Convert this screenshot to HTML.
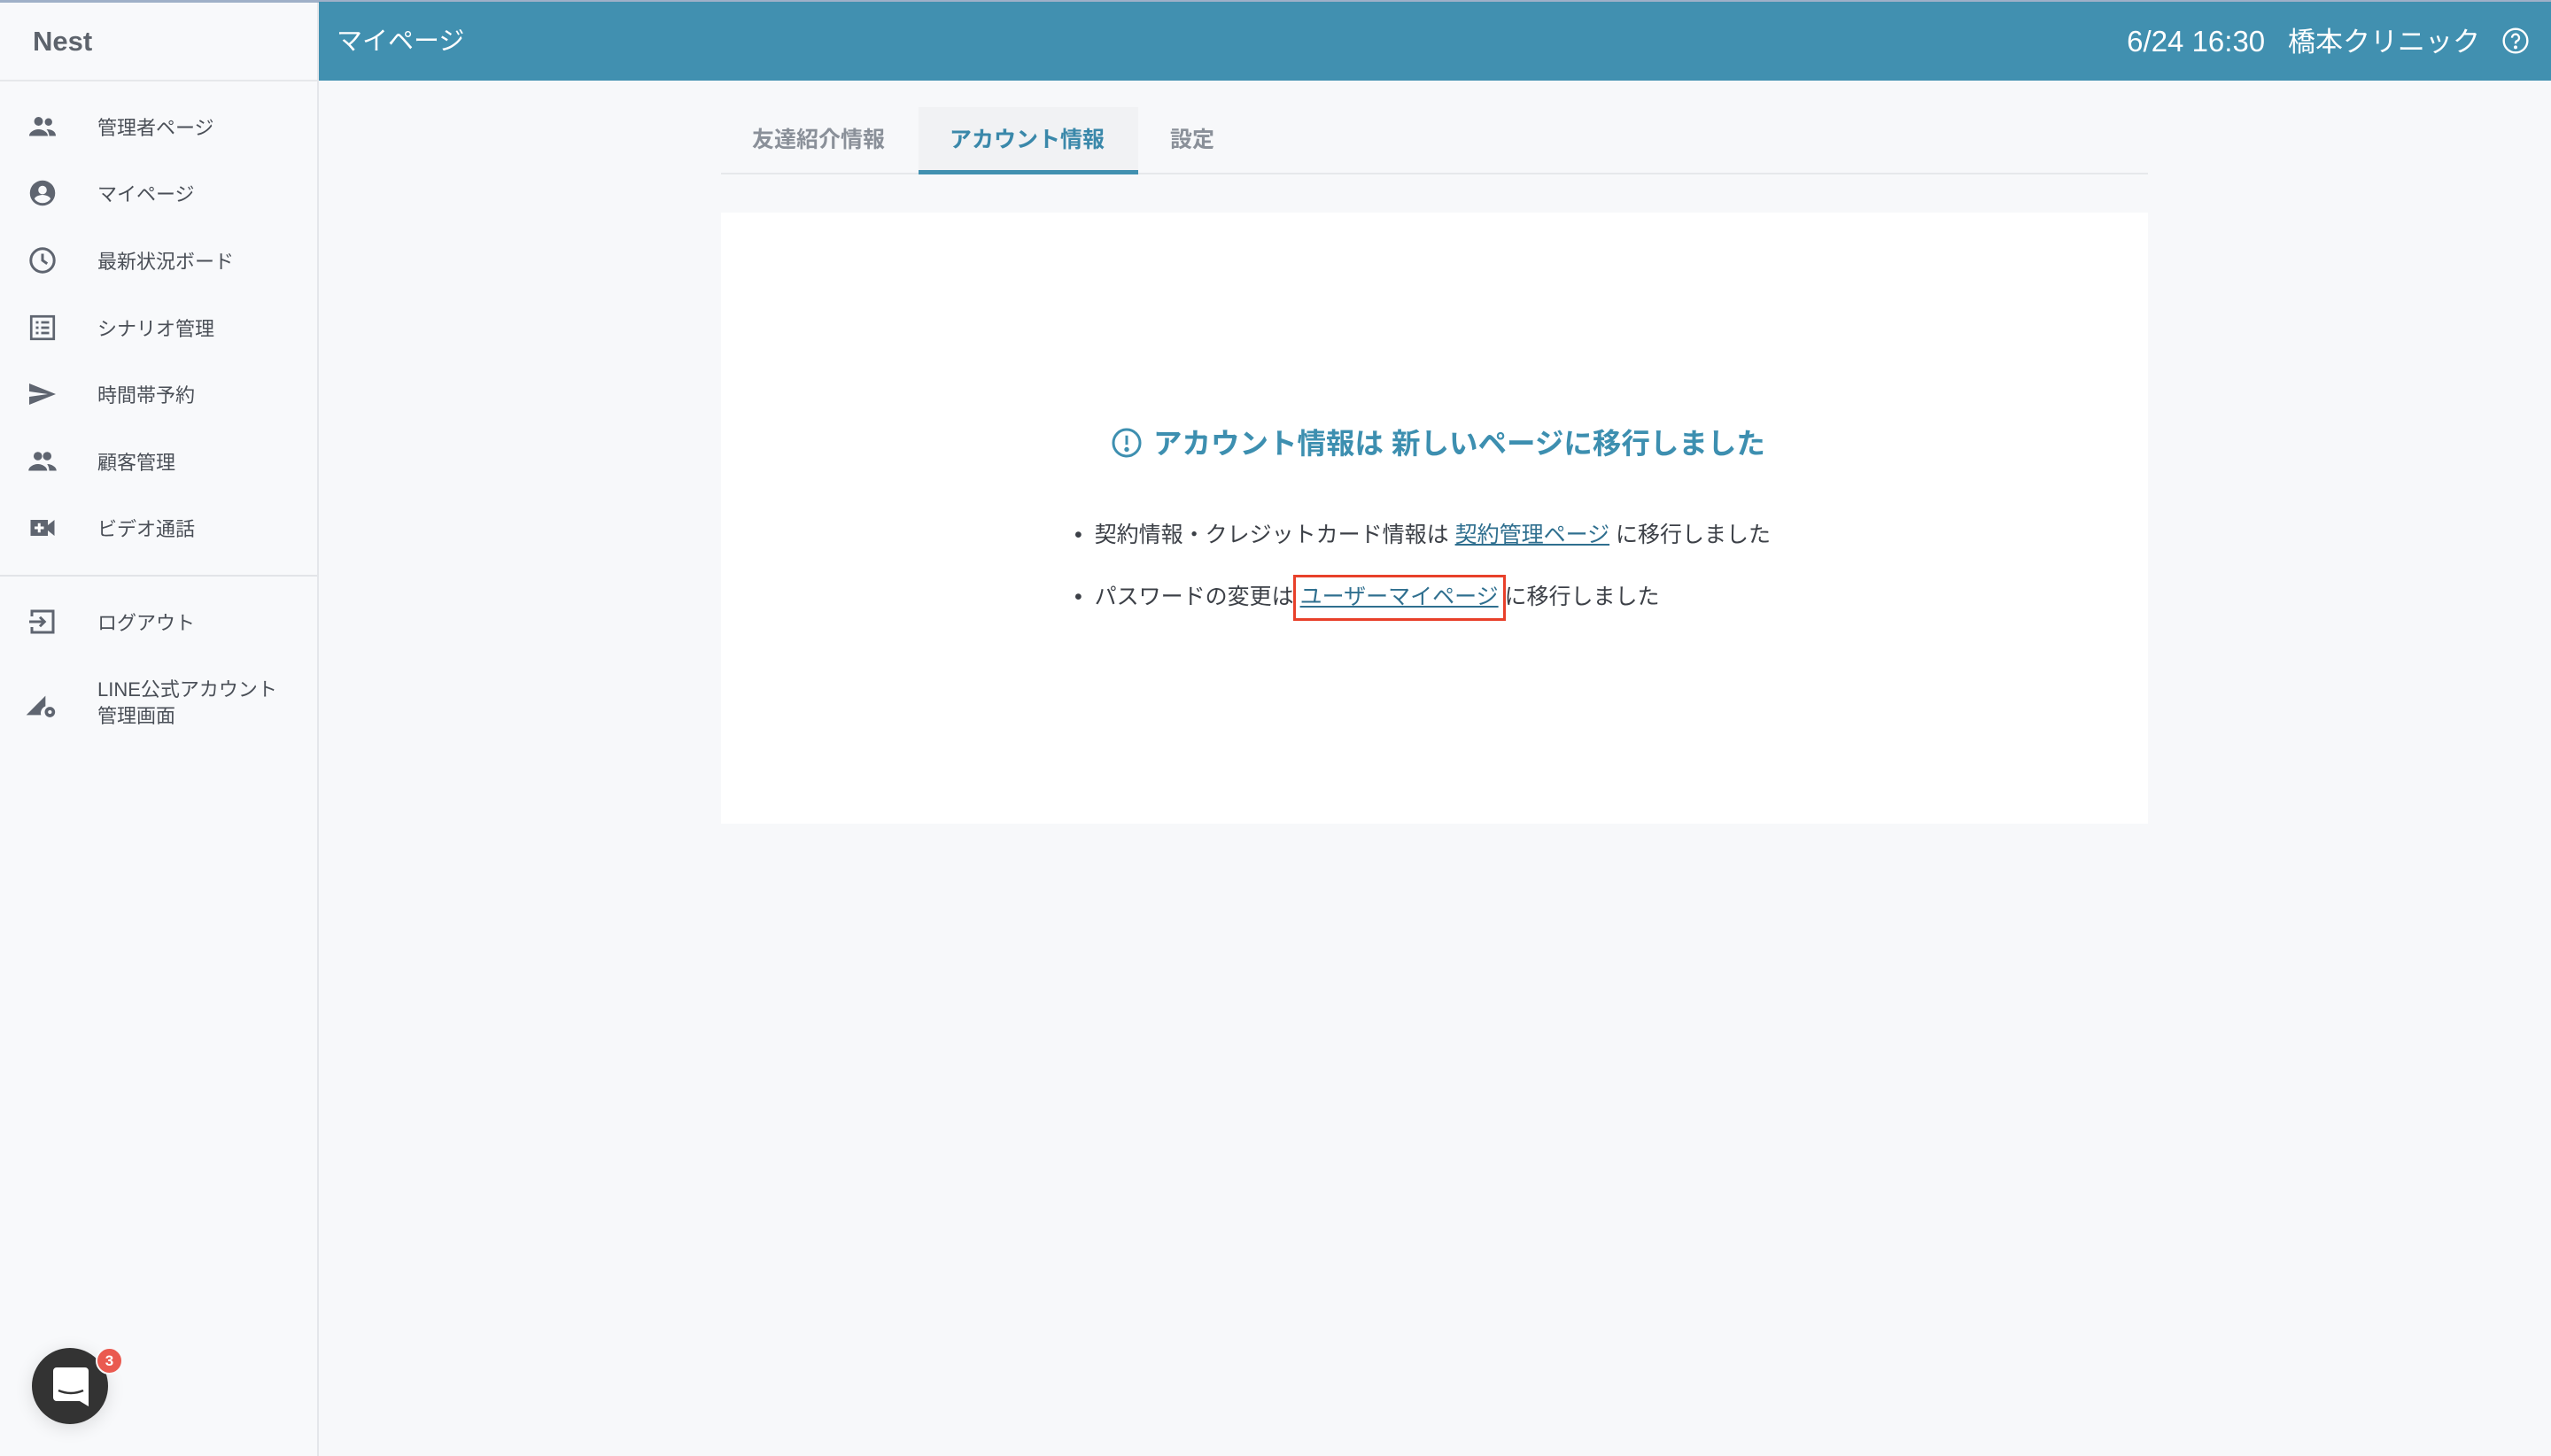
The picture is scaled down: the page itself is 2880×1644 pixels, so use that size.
<!DOCTYPE html>
<html><head><meta charset="utf-8"><style>
*{margin:0;padding:0;box-sizing:border-box}
body{width:2880px;height:1644px;background:#f7f8fa;font-family:"Liberation Sans","Noto Sans CJK JP",sans-serif;position:relative;overflow:hidden;color:#3c4047}
.abs{position:absolute}
#top{left:0;top:0;width:2880px;height:3px;background:#9fb0c8}
#side{left:0;top:0;width:360px;height:1644px;background:#f8f9fb;border-right:2px solid #e4e6ea}
#head{left:360px;top:2px;width:2520px;height:89px;background:#4190b0;color:#fff}
.mi{position:absolute;left:110px;font-size:22px;color:#4a4f57;line-height:30px}
.ic{position:absolute;left:30px;width:36px;height:36px}
</style></head><body>
<div id="side" class="abs">
 <div class="abs" style="left:37px;top:29px;font-size:31px;font-weight:bold;color:#5d636c">Nest</div>
 <div class="abs" style="left:0;top:90px;width:358px;height:2px;background:#e6e8eb"></div>
 <div class="abs" style="left:0;top:649px;width:358px;height:2px;background:#e2e4e8"></div>

 <svg class="ic" style="top:125px" viewBox="0 0 24 24" fill="#5f6570"><circle cx="9" cy="8" r="3.3"/><circle cx="16.5" cy="8.5" r="2.8"/><path d="M2 19c0-3 4-5 7-5s7 2 7 5zM15 14c3 0 7 1 7 5h-5c0-2-1-4-2-5z"/></svg>
 <div class="mi" style="top:130px">管理者ページ</div>
 <svg class="ic" style="top:200px" viewBox="0 0 24 24" fill="#5f6570"><path d="M12 2.5a9.5 9.5 0 1 0 0 19a9.5 9.5 0 1 0 0-19zm0 4a3.2 3.2 0 1 1 0 6.4a3.2 3.2 0 1 1 0-6.4zm0 13a7.5 7.5 0 0 1-6-3c0-2 4-3.2 6-3.2s6 1.2 6 3.2a7.5 7.5 0 0 1-6 3z"/></svg>
 <div class="mi" style="top:205px">マイページ</div>
 <svg class="ic" style="top:276px" viewBox="0 0 24 24" fill="none" stroke="#5f6570" stroke-width="2"><circle cx="12" cy="12" r="8.8"/><path d="M12 7v5l3.5 2.5"/></svg>
 <div class="mi" style="top:281px">最新状況ボード</div>
 <svg class="ic" style="top:352px" viewBox="0 0 24 24" fill="none" stroke="#5f6570" stroke-width="1.8"><rect x="3.5" y="3.5" width="17" height="17"/><path d="M7 8h2M11 8h6M7 12h2M11 12h6M7 16h2M11 16h6"/></svg>
 <div class="mi" style="top:357px">シナリオ管理</div>
 <svg class="ic" style="top:427px" viewBox="0 0 24 24" fill="#5f6570"><path d="M2 4l20 8-20 8v-6l14-2-14-2z"/></svg>
 <div class="mi" style="top:432px">時間帯予約</div>
 <svg class="ic" style="top:503px" viewBox="0 0 24 24" fill="#5f6570"><circle cx="8.5" cy="8" r="3.2"/><circle cx="15.5" cy="8" r="3.2"/><path d="M1.5 19c0-3 4-5 7-5s7 2 7 5zM15.5 14c3 0 7 2 7 5h-5.5c0-2-.5-3.5-1.5-5z"/></svg>
 <div class="mi" style="top:508px">顧客管理</div>
 <svg class="ic" style="top:578px" viewBox="0 0 24 24" fill="#5f6570"><path d="M3 6h13v12H3zM16 10l5-4v12l-5-4z"/><path d="M9.5 8.5v7M6 12h7" stroke="#fff" stroke-width="2"/></svg>
 <div class="mi" style="top:583px">ビデオ通話</div>
 <svg class="ic" style="top:684px" viewBox="0 0 24 24" fill="none" stroke="#5f6570" stroke-width="2"><path d="M4 8V4h16v16H4v-4"/><path d="M2 12h11M10 8.5l3.5 3.5-3.5 3.5"/></svg>
 <div class="mi" style="top:689px">ログアウト</div>
 <svg class="ic" style="top:774px;left:28px;width:40px;height:40px" viewBox="0 0 24 24" fill="#5f6570"><path d="M1 20L14 7v7a5 5 0 0 0-3 6z"/><circle cx="17" cy="18" r="3.5"/><circle cx="17" cy="18" r="1.3" fill="#f8f9fb"/></svg>
 <div class="mi" style="top:764px">LINE公式アカウント<br>管理画面</div>

 <div class="abs" style="left:36px;top:1522px;width:86px;height:86px;border-radius:50%;background:#333;box-shadow:0 4px 20px rgba(0,0,0,.12)"></div>
 <svg class="abs" style="left:60px;top:1544px" width="40" height="44" viewBox="0 0 40 44"><path d="M4 0h32a4 4 0 0 1 4 4v40l-10-6H4a4 4 0 0 1-4-4V4a4 4 0 0 1 4-4z" fill="#fff"/><path d="M6 26q14 6 28 0" stroke="#333" stroke-width="2.5" fill="none"/></svg>
 <div class="abs" style="left:108px;top:1521px;width:31px;height:31px;border-radius:50%;background:#ea5a50;border:2px solid #f8f9fb;color:#fff;font-size:17px;font-weight:bold;text-align:center;line-height:27px">3</div>
</div>
<div id="top" class="abs"></div>
<div id="head" class="abs">
 <div class="abs" style="left:20px;top:21px;font-size:29px">マイページ</div>
 <div class="abs" style="right:80px;top:20px;font-size:31px;white-space:nowrap;text-align:right"><span style="font-size:33px">6/24 16:30</span>&nbsp;&nbsp;&nbsp;橋本クリニック</div>
 <svg class="abs" style="left:2464px;top:28px" width="32" height="32" viewBox="0 0 24 24" fill="none" stroke="#fff" stroke-width="1.8"><circle cx="12" cy="12" r="10"/><path d="M9 9.5a3 3 0 1 1 4 2.8c-1 .4-1 1.2-1 2.2"/><circle cx="12" cy="17.5" r=".6" fill="#fff"/></svg>
</div>

<div class="abs" style="left:814px;top:195px;width:1611px;height:2px;background:#e6e8eb"></div>
<div class="abs" style="left:1037px;top:121px;width:248px;height:76px;background:#f1f2f4;border-bottom:5px solid #4190b0"></div>
<div class="abs" style="left:849px;top:138px;font-size:25px;font-weight:bold;color:#8a9099">友達紹介情報</div>
<div class="abs" style="left:1072px;top:138px;font-size:25px;font-weight:bold;color:#3a88aa">アカウント情報</div>
<div class="abs" style="left:1321px;top:138px;font-size:25px;font-weight:bold;color:#8a9099">設定</div>

<div class="abs" style="left:814px;top:240px;width:1611px;height:690px;background:#fff"></div>
<svg class="abs" style="left:1254px;top:482px" width="36" height="36" viewBox="0 0 24 24" fill="none" stroke="#3d8fb0" stroke-width="2"><circle cx="12" cy="12" r="10"/><path d="M12 6.5v7"/><circle cx="12" cy="17" r=".8" fill="#3d8fb0"/></svg>
<div class="abs" style="left:1302px;top:475px;font-size:32.5px;font-weight:bold;color:#3d8fb0;white-space:nowrap">アカウント情報は 新しいページに移行しました</div>
<div class="abs" style="left:1213px;top:584px;font-size:25px;color:#3c4047;white-space:nowrap">•&nbsp;&nbsp;契約情報・クレジットカード情報は <span style="color:#2f6f8f;text-decoration:underline">契約管理ページ</span> に移行しました</div>
<div class="abs" style="left:1213px;top:654px;font-size:25px;color:#3c4047;white-space:nowrap">•&nbsp;&nbsp;パスワードの変更は <span style="color:#2f6f8f;text-decoration:underline">ユーザーマイページ</span> に移行しました</div>
<div class="abs" style="left:1460px;top:649px;width:240px;height:52px;border:3px solid #e8402a"></div>
</body></html>
